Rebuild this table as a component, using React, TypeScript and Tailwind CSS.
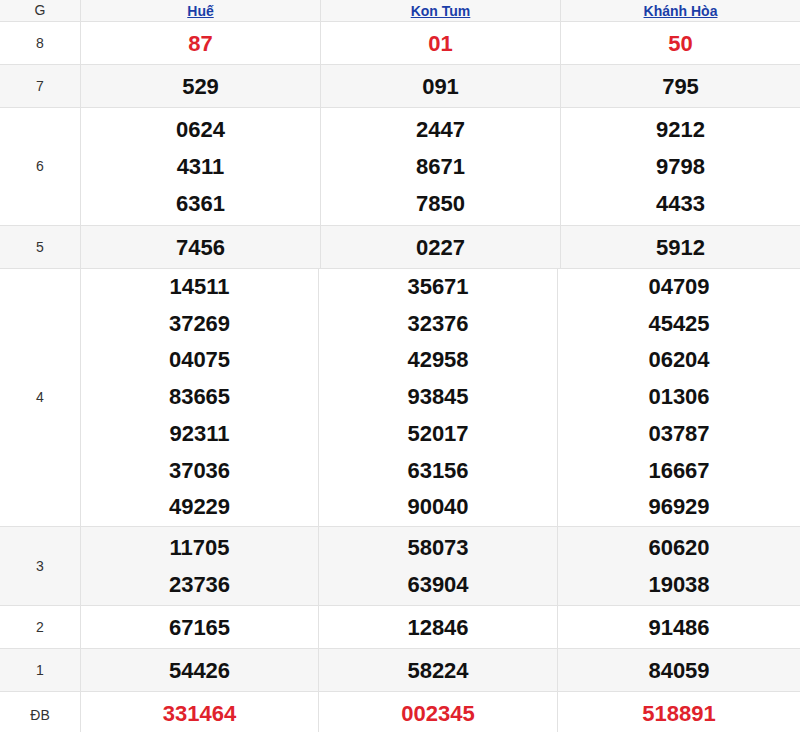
import React from 'react';

type Row = {
  label: string;
  values: string[][];
  h: string;
  bg: string;
  red?: boolean;
  tight?: boolean;
  last?: boolean;
};

const provinces = ['Huế', 'Kon Tum', 'Khánh Hòa'];

const rows: Row[] = [
  { label: '8', values: [['87'], ['01'], ['50']], h: 'h-[43px]', bg: 'bg-white', red: true },
  { label: '7', values: [['529'], ['091'], ['795']], h: 'h-[43px]', bg: 'bg-[#f6f6f6]' },
  {
    label: '6',
    values: [
      ['0624', '4311', '6361'],
      ['2447', '8671', '7850'],
      ['9212', '9798', '4433'],
    ],
    h: 'h-[118px]',
    bg: 'bg-white',
  },
  { label: '5', values: [['7456'], ['0227'], ['5912']], h: 'h-[43px]', bg: 'bg-[#f6f6f6]' },
  {
    label: '4',
    values: [
      ['14511', '37269', '04075', '83665', '92311', '37036', '49229'],
      ['35671', '32376', '42958', '93845', '52017', '63156', '90040'],
      ['04709', '45425', '06204', '01306', '03787', '16667', '96929'],
    ],
    h: 'h-[258px]',
    bg: 'bg-white',
    tight: true,
  },
  {
    label: '3',
    values: [
      ['11705', '23736'],
      ['58073', '63904'],
      ['60620', '19038'],
    ],
    h: 'h-[79px]',
    bg: 'bg-[#f6f6f6]',
    tight: true,
  },
  { label: '2', values: [['67165'], ['12846'], ['91486']], h: 'h-[43px]', bg: 'bg-white', tight: true },
  { label: '1', values: [['54426'], ['58224'], ['84059']], h: 'h-[43px]', bg: 'bg-[#f6f6f6]', tight: true },
  {
    label: 'ĐB',
    values: [['331464'], ['002345'], ['518891']],
    h: 'h-[30px]',
    bg: 'bg-white',
    red: true,
    tight: true,
    last: true,
  },
];

export default function App() {
  return (
    <div
      className="w-[800px] min-h-[733px] bg-white"
      style={{ fontFamily: '"Liberation Sans", Arial, sans-serif' }}
    >
      {/* header */}
      <div className="grid grid-cols-[80px_240px_240px_240px] h-[22px] bg-[#f7f7f7] border-b border-[#e2e2e2]">
        <div className="flex items-center justify-center text-[14px] text-[#333]">G</div>
        {provinces.map((p) => (
          <div key={p} className="flex items-center justify-center border-l border-[#e2e2e2]">
            <a href="#" className="text-[14px] font-bold text-[#1a3ea8] underline leading-none">
              {p}
            </a>
          </div>
        ))}
      </div>

      {rows.map((r) => (
        <div
          key={r.label}
          className={`grid ${r.tight ? 'grid-cols-[80px_238px_239px_243px]' : 'grid-cols-[80px_240px_240px_240px]'} ${r.h} ${r.bg} ${r.last ? '' : 'border-b border-[#e2e2e2]'}`}
        >
          <div
            className={`flex justify-center text-[14px] text-[#333] ${r.last ? 'items-start pt-[13px]' : 'items-center'}`}
          >
            {r.label}
          </div>
          {r.values.map((col, i) => (
            <div
              key={i}
              className={`flex flex-col items-center border-l border-[#e2e2e2] ${r.last ? 'justify-start pt-[3px]' : 'justify-center'}`}
            >
              {col.map((n) => (
                <span
                  key={n}
                  className={`text-[22px] font-bold ${r.label === '4' ? 'leading-[36.7px]' : 'leading-[37px]'} ${r.red ? 'text-[#e0222c]' : 'text-[#111]'}`}
                >
                  {n}
                </span>
              ))}
            </div>
          ))}
        </div>
      ))}
    </div>
  );
}
